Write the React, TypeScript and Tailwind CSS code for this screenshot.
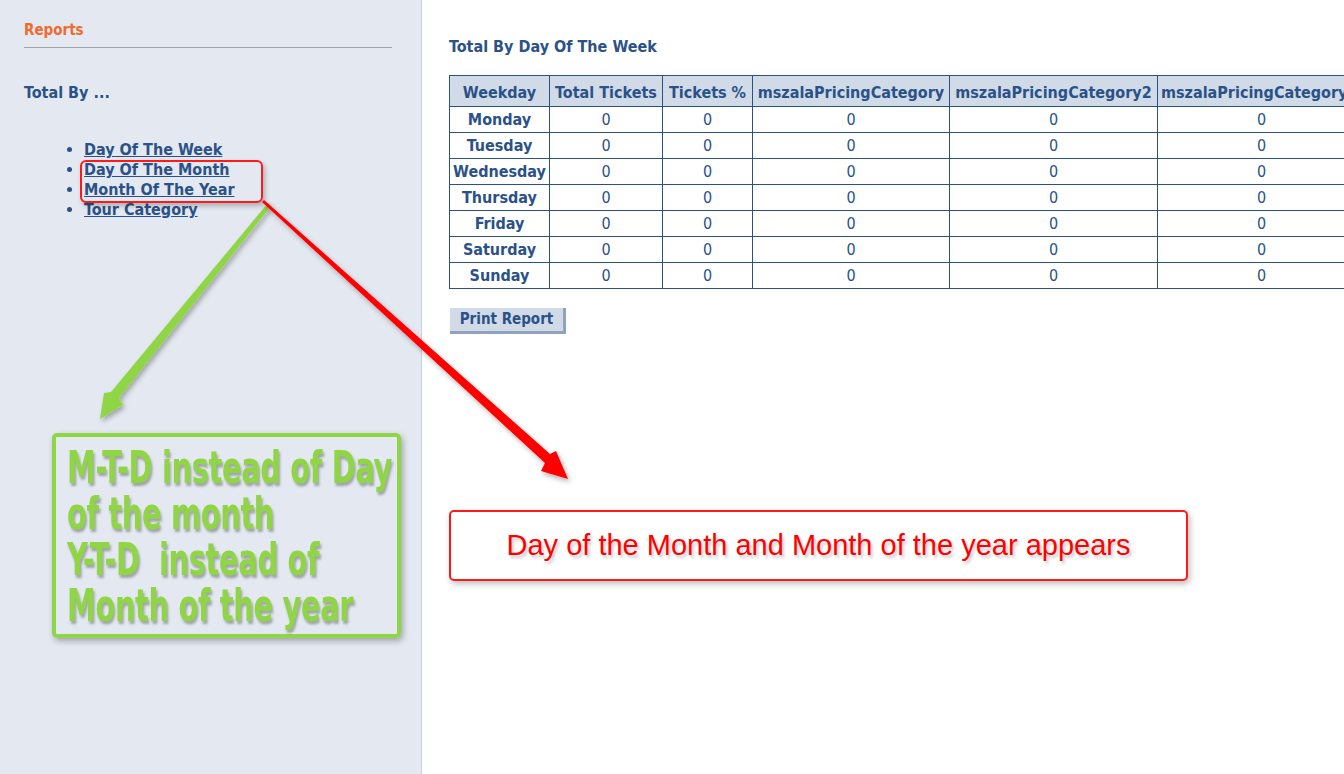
import React from "react";

const blue = "text-[#2b5288]";
const days = ["Monday", "Tuesday", "Wednesday", "Thursday", "Friday", "Saturday", "Sunday"];
const cols = [
  { name: "Weekday", w: "w-[100px]" },
  { name: "Total Tickets", w: "w-[113px]" },
  { name: "Tickets %", w: "w-[90px]" },
  { name: "mszalaPricingCategory", w: "w-[197px]" },
  { name: "mszalaPricingCategory2", w: "w-[208px]" },
  { name: "mszalaPricingCategory", w: "w-[208px]" },
];
const links = ["Day Of The Week", "Day Of The Month", "Month Of The Year", "Tour Category"];

function Sidebar() {
  return (
    <aside className="w-[422px] shrink-0 bg-[#e4e9f1] border-r border-[#c9d1dc] px-6 pt-[20px] min-h-[774px]">
      <h2 className="text-[15px] font-bold text-[#f26a2e] leading-5">Reports</h2>
      <div className="mt-[7px] mr-[5px] h-px bg-[#a0a4aa]" />
      <h3 className={`mt-[35px] text-[16px] font-bold leading-5 ${blue}`}>Total By ...</h3>
      <ul className="mt-[37px] ml-[44px] list-disc pl-4 marker:text-[#2b5288]">
        {links.map((l) => (
          <li key={l} className={`text-[16px] font-bold leading-5 ${blue}`}>
            <a href="#" className="underline underline-offset-1">
              {l}
            </a>
          </li>
        ))}
      </ul>
    </aside>
  );
}

function ReportTable() {
  return (
    <table className="mt-[18px] border-collapse table-fixed text-[16px] w-[916px] shrink-0">
      <colgroup>
        {cols.map((c, i) => (
          <col key={i} className={c.w} />
        ))}
      </colgroup>
      <thead>
        <tr className="bg-[#d0dbe7]">
          {cols.map((c, i) => (
            <th
              key={i}
              className={`h-[31px] pt-[3px] border border-[#2b5288] font-bold whitespace-nowrap overflow-hidden px-0 ${
                i === cols.length - 1 ? "text-left pl-[3px]" : "text-center"
              } ${blue}`}
            >
              {c.name}
            </th>
          ))}
        </tr>
      </thead>
      <tbody>
        {days.map((d) => (
          <tr key={d} className="h-[26px]">
            <td className={`border border-[#2b5288] font-bold text-center ${blue}`}>{d}</td>
            {cols.slice(1).map((_, i) => (
              <td key={i} className={`border border-[#2b5288] text-center ${blue}`}>
                0
              </td>
            ))}
          </tr>
        ))}
      </tbody>
    </table>
  );
}

function Arrows() {
  return (
    <svg className="absolute inset-0 pointer-events-none" width="1344" height="774">
      <defs>
        <filter id="sh" x="-20%" y="-20%" width="140%" height="140%">
          <feDropShadow dx="2" dy="3" stdDeviation="2.5" floodColor="#000" floodOpacity="0.3" />
        </filter>
      </defs>
      {/* green arrow */}
      <polygon
        points="268,203 271,206 119,398 123,405 100,419 104,393 111,392"
        fill="#8fd545"
        filter="url(#sh)"
      />
      {/* red arrow */}
      <polygon
        points="262,202 264,200 550,454 556,451 568,479 541,471 545,463"
        fill="#ff0000"
        filter="url(#sh)"
      />
    </svg>
  );
}

export default function App() {
  return (
    <div
      className="relative w-[1344px] h-[774px] overflow-hidden bg-white flex"
      style={{ fontFamily: "'DejaVu Sans Condensed', Tahoma, 'DejaVu Sans', sans-serif" }}
    >
      <Sidebar />
      <main className="flex-1 min-w-0 pl-[27px] pt-[37px] overflow-hidden">
        <h1 className={`text-[16px] font-bold leading-5 ${blue}`}>Total By Day Of The Week</h1>
        <ReportTable />
        <button
          className={`mt-[19px] ml-px h-[26px] w-[116px] bg-[#d0dbe7] border-r-[3px] border-b-[3px] border-[#8fa3bd] text-[15px] font-bold ${blue}`}
        >
          Print Report
        </button>
      </main>

      {/* annotation: highlight around two links */}
      <div className="absolute left-[80px] top-[160px] w-[183px] h-[43px] rounded-[6px] border-2 border-[#ff1a1a] shadow-[2px_3px_5px_rgba(0,0,0,0.25)]" />

      <Arrows />

      {/* green note */}
      <div className="absolute left-[52px] top-[433px] w-[349px] h-[205px] rounded-[5px] border-[4px] border-[#8fd545] shadow-[2px_3px_6px_rgba(0,0,0,0.3)] pl-[11px] pt-[8px]">
        <p
          className="origin-top-left scale-x-[0.73] text-[#8fd545] text-[44px] font-bold leading-[46px] tracking-[-0.5px] [text-shadow:2px_3px_3px_rgba(0,0,0,0.3)] whitespace-pre"
          style={{ fontFamily: "Impact, 'DejaVu Sans Condensed', sans-serif" }}
        >
          {"M-T-D instead of Day\nof the month\nY-T-D  instead of\nMonth of the year"}
        </p>
      </div>

      {/* red note */}
      <div className="absolute left-[449px] top-[510px] w-[739px] h-[71px] rounded-[5px] border-2 border-[#ff1a1a] bg-white shadow-[2px_3px_6px_rgba(0,0,0,0.25)] flex items-center justify-center">
        <p
          className="text-[#ff0000] text-[29px] [text-shadow:2px_3px_3px_rgba(0,0,0,0.2)]"
          style={{ fontFamily: "'Liberation Sans', Arial, sans-serif" }}
        >
          Day of the Month and Month of the year appears
        </p>
      </div>
    </div>
  );
}
